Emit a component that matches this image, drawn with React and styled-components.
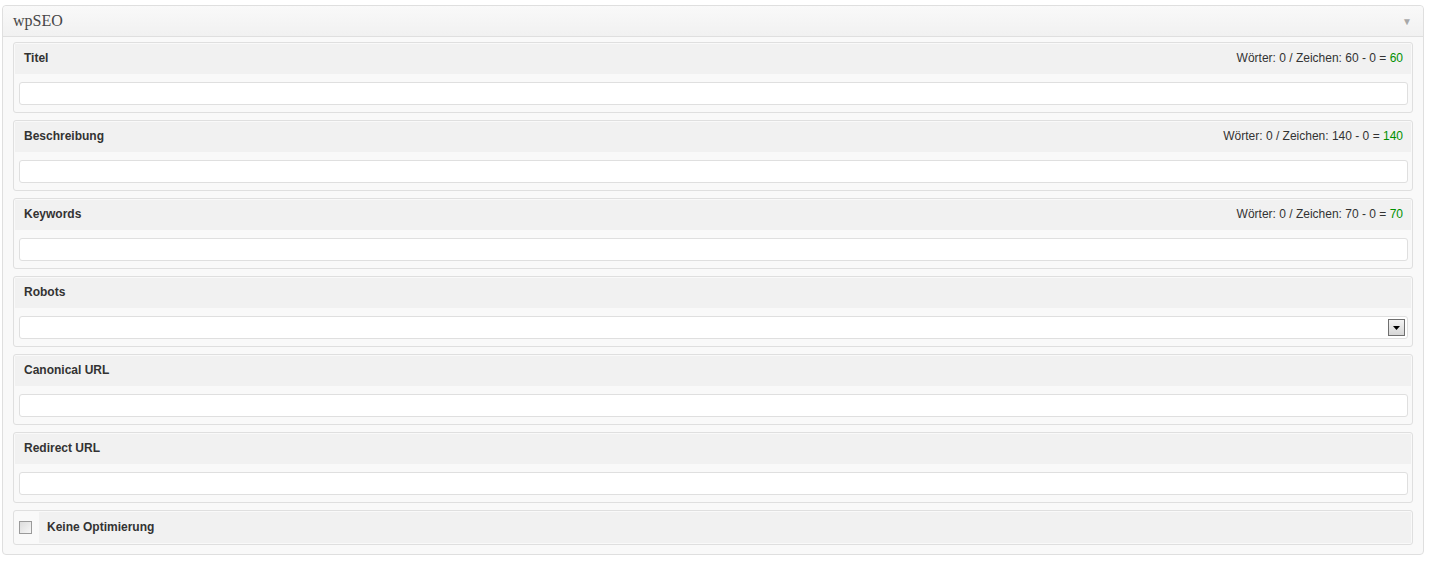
import React from "react";
import styled, { createGlobalStyle } from "styled-components";

const GlobalStyle = createGlobalStyle`
  body {
    margin: 0;
    background: #fff;
    font-family: "Liberation Sans", Arial, sans-serif;
  }
`;

const Page = styled.div`
  padding: 5px 8px 0 2px;
`;

const Box = styled.div`
  border: 1px solid #dfdfdf;
  border-radius: 4px;
  background: #f9f9f9;
  box-shadow: 0 1px 0 #fff inset;
`;

const BoxHeader = styled.div`
  display: flex;
  align-items: center;
  justify-content: space-between;
  height: 30px;
  padding: 0 10px;
  border-bottom: 1px solid #dfdfdf;
  background: linear-gradient(to bottom, #f9f9f9, #f1f1f1);
  border-radius: 4px 4px 0 0;
`;

const BoxTitle = styled.h3`
  margin: 0;
  font-family: "Liberation Serif", Georgia, serif;
  font-weight: normal;
  font-size: 16px;
  color: #464646;
`;

const Toggle = styled.span`
  font-size: 10px;
  color: #a8a8a8;
  margin-right: 1px;
`;

const Body = styled.div`
  display: flex;
  flex-direction: column;
  gap: 7px;
  padding: 5px 10px 9px 10px;
`;

const Section = styled.div`
  border: 1px solid #dfdfdf;
  border-radius: 3px;
  padding: 1px;
  background: #f9f9f9;
`;

const SectionHead = styled.div`
  display: flex;
  align-items: center;
  justify-content: space-between;
  box-sizing: border-box;
  height: 30px;
  padding: 0 8px 2px 9px;
  background: #f1f1f1;
  font-size: 12px;
  color: #333;
`;

const Label = styled.label`
  font-weight: bold;
  color: #333;
`;

const Counter = styled.span`
  color: #333;
`;

const Remaining = styled.span`
  color: #009000;
`;

const Field = styled.div`
  position: relative;
  margin: 8px 3px 6px 4px;
`;

const Input = styled.input`
  display: block;
  box-sizing: border-box;
  width: 100%;
  height: 23px;
  border: 1px solid #dfdfdf;
  border-radius: 3px;
  background: #fff;
  outline: none;
`;

const SelectButton = styled.span`
  position: absolute;
  right: 3px;
  top: 3px;
  width: 17px;
  height: 17px;
  box-sizing: border-box;
  border: 1px solid #6f6f6f;
  background: linear-gradient(to bottom, #f4f4f4, #d6d6d6);
  display: flex;
  align-items: center;
  justify-content: center;
`;

const CheckRow = styled.div`
  display: flex;
  align-items: stretch;
  gap: 6px;
  border: 1px solid #dfdfdf;
  border-radius: 3px;
  padding: 1px 1px 1px 5px;
  background: #f9f9f9;
`;

const Check = styled.span`
  align-self: center;
  width: 13px;
  height: 13px;
  box-sizing: border-box;
  border: 1px solid #9a9a9a;
  background: linear-gradient(to bottom right, #dcdcdc, #f6f6f6);
  margin-right: 1px;
`;

const CheckLabel = styled.div`
  flex: 1;
  display: flex;
  align-items: center;
  box-sizing: border-box;
  height: 31px;
  padding: 0 0 2px 8px;
  background: #f1f1f1;
  font-size: 12px;
  font-weight: bold;
  color: #333;
`;

const fields = [
  { label: "Titel", max: 60 },
  { label: "Beschreibung", max: 140 },
  { label: "Keywords", max: 70 },
  { label: "Robots", select: true },
  { label: "Canonical URL" },
  { label: "Redirect URL" },
];

export default function App() {
  return (
    <Page>
      <GlobalStyle />
      <Box>
        <BoxHeader>
          <BoxTitle>wpSEO</BoxTitle>
          <Toggle>▼</Toggle>
        </BoxHeader>
        <Body>
          {fields.map((f) => (
            <Section key={f.label}>
              <SectionHead>
                <Label>{f.label}</Label>
                {f.max && (
                  <Counter>
                    Wörter: 0 / Zeichen: {f.max} - 0 = <Remaining>{f.max}</Remaining>
                  </Counter>
                )}
              </SectionHead>
              <Field>
                <Input type="text" />
                {f.select && (
                  <SelectButton>
                    <svg width="7" height="4" viewBox="0 0 7 4">
                      <path d="M0 0h7L3.5 4z" fill="#000" />
                    </svg>
                  </SelectButton>
                )}
              </Field>
            </Section>
          ))}
          <CheckRow>
            <Check />
            <CheckLabel>Keine Optimierung</CheckLabel>
          </CheckRow>
        </Body>
      </Box>
    </Page>
  );
}
